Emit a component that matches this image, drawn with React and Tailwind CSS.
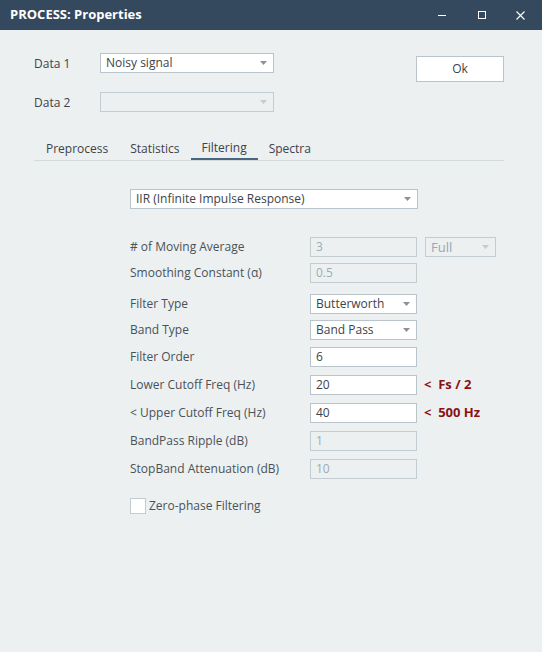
import React, { useState } from 'react';

const font = { fontFamily: "'Segoe UI', 'Open Sans', 'Liberation Sans', sans-serif" };

const Arrow = ({ disabled }) => (
  <svg width="7" height="4" viewBox="0 0 7 4" className="shrink-0">
    <path d="M0 0h7L3.5 4z" fill={disabled ? '#c4ccd0' : '#8a9399'} />
  </svg>
);

const Combo = ({ value, disabled, className }) => (
  <div
    className={`flex h-[20px] items-center justify-between border pl-[5px] pr-[6px] text-[12px] ${
      disabled ? 'border-[#c3cdd1] bg-[#ecf0f1] text-[#9aa6b4]' : 'border-[#b9c5ca] bg-white text-[#3d4348]'
    } ${className}`}
  >
    <span className="leading-none">{value}</span>
    <Arrow disabled={disabled} />
  </div>
);

const Field = ({ value, disabled }) => (
  <div
    className={`flex h-[20px] w-[107px] items-center border pl-[5px] text-[12px] ${
      disabled ? 'border-[#c3cdd1] bg-[#ecf0f1] text-[#a2abb2]' : 'border-[#b9c5ca] bg-white text-[#3d4348]'
    }`}
  >
    {value}
  </div>
);

const Row = ({ label, children, className }) => (
  <div className={`flex h-[20px] items-center ${className}`}>
    <div className="w-[180px] text-[12px] text-[#4a5258]">{label}</div>
    {children}
  </div>
);

const Hint = ({ children }) => (
  <span className="ml-[7px] text-[13px] font-bold text-[#8b1010] whitespace-pre">{children}</span>
);

export default function App() {
  const [tab, setTab] = useState('Filtering');
  const tabs = ['Preprocess', 'Statistics', 'Filtering', 'Spectra'];

  return (
    <div className="h-[652px] w-[542px] overflow-hidden bg-[#ecf0f1]" style={font}>
      {/* window caption */}
      <div className="flex h-[30px] items-center bg-[#34495e] pl-[10px] text-white">
        <span className="text-[13px] font-bold">PROCESS: Properties</span>
        <div className="ml-auto flex h-full items-center">
          <div className="flex h-full w-[40px] items-center justify-center">
            <div className="h-px w-[8px] bg-white" />
          </div>
          <div className="flex h-full w-[40px] items-center justify-center">
            <div className="h-[8px] w-[8px] border border-white" />
          </div>
          <div className="flex h-full w-[40px] items-center justify-center pr-[4px]">
            <svg width="9" height="9" viewBox="0 0 9 9">
              <path d="M0.5 0.5l8 8M8.5 0.5l-8 8" stroke="white" strokeWidth="1.1" />
            </svg>
          </div>
        </div>
      </div>

      <div className="pl-[34px] pr-[38px]">
        {/* data sources + ok */}
        <div className="flex justify-between">
          <div className="flex flex-col">
            <div className="mt-[23px] flex items-center">
              <span className="w-[66px] pt-px text-[12px] text-[#3d4348]">Data 1</span>
              <Combo value="Noisy signal" className="w-[174px]" />
            </div>
            <div className="mt-[19px] flex items-center">
              <span className="w-[66px] pt-px text-[12px] text-[#3d4348]">Data 2</span>
              <Combo value="" disabled className="w-[174px]" />
            </div>
          </div>
          <button className="mt-[26px] h-[26px] w-[88px] border border-[#b9c5ca] bg-white text-[12px] text-[#3d4348]">
            Ok
          </button>
        </div>

        {/* tabs */}
        <div className="mt-[24px] flex h-[25px] border-b border-[#d3dadd] pl-[1px]">
          {tabs.map((t) => (
            <button
              key={t}
              onClick={() => setTab(t)}
              className={`h-full px-[11px] pt-[2px] text-[12px] ${
                tab === t ? 'border-b-2 border-[#4a6580] text-[#3d4348]' : 'text-[#3d4348]'
              }`}
            >
              {t}
            </button>
          ))}
        </div>

        {/* filtering page */}
        <div className="pl-[96px]">
          <Combo value="IIR (Infinite Impulse Response)" className="mt-[28px] w-[288px]" />

          <Row label="# of Moving Average" className="mt-[28px]">
            <Field value="3" disabled />
            <Combo value="Full" disabled className="ml-[8px] w-[71px] !text-[13px]" />
          </Row>
          <Row label="Smoothing Constant (α)" className="mt-[6px]">
            <Field value="0.5" disabled />
          </Row>
          <Row label="Filter Type" className="mt-[11px]">
            <Combo value="Butterworth" className="w-[107px]" />
          </Row>
          <Row label="Band Type" className="mt-[6px]">
            <Combo value="Band Pass" className="w-[107px]" />
          </Row>
          <Row label="Filter Order" className="mt-[7px]">
            <Field value="6" />
          </Row>
          <Row label="Lower Cutoff Freq (Hz)" className="mt-[8px]">
            <Field value="20" />
            <Hint>{'<  Fs / 2'}</Hint>
          </Row>
          <Row label="< Upper Cutoff Freq (Hz)" className="mt-[8px]">
            <Field value="40" />
            <Hint>{'<  500 Hz'}</Hint>
          </Row>
          <Row label="BandPass Ripple (dB)" className="mt-[8px]">
            <Field value="1" disabled />
          </Row>
          <Row label="StopBand Attenuation (dB)" className="mt-[8px]">
            <Field value="10" disabled />
          </Row>

          <label className="mt-[18px] flex items-center">
            <span className="h-[16px] w-[16px] border border-[#c3cdd1] bg-white" />
            <span className="ml-[3px] text-[12px] text-[#4a5258]">Zero-phase Filtering</span>
          </label>
        </div>
      </div>
    </div>
  );
}
